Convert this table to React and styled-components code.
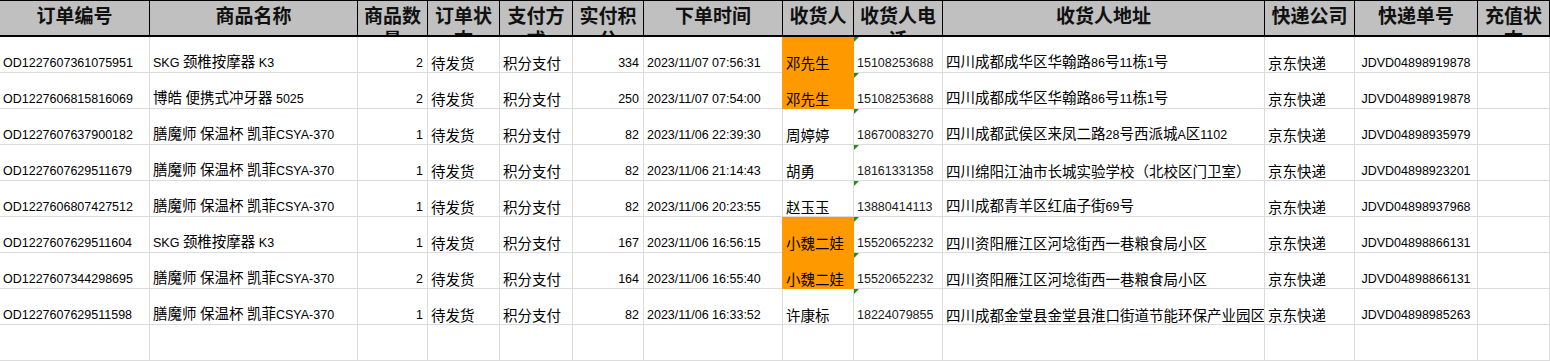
import React from "react";
import styled, { createGlobalStyle } from "styled-components";

const GlobalStyle = createGlobalStyle`
  html, body { margin: 0; padding: 0; background: #ffffff; }
  body { font-family: "Noto Sans CJK SC", "Liberation Sans", sans-serif; }
`;

const COLS = [150, 208, 70, 72, 73, 71, 139, 71, 89, 322, 90, 123, 72];

const Sheet = styled.div`
  display: grid;
  grid-template-columns: ${COLS.map((w) => w + "px").join(" ")};
  width: 1550px;
  overflow: hidden;
`;

const HeaderCell = styled.div`
  box-sizing: border-box;
  height: 37px;
  background: #c0c0c0;
  border-top: 1px solid #000;
  border-bottom: 2px solid #000;
  border-right: 1px solid #000;
  padding: 2px 1px 0;
  overflow: hidden;
  text-align: center;
  font-family: "Noto Sans CJK SC", sans-serif;
  font-weight: 700;
  font-size: 19px;
  line-height: 24px;
  color: #111;
  word-break: break-all;
`;

const Cell = styled.div`
  position: relative;
  box-sizing: border-box;
  height: 36px;
  display: flex;
  align-items: flex-end;
  justify-content: ${(p) => (p.$align === "right" ? "flex-end" : p.$align === "center" ? "center" : "flex-start")};
  padding: 0 ${(p) => (p.$align === "right" ? "4px" : "3px")} 1px 3px;
  border-right: 1px solid ${(p) => (p.$fill ? p.$fill : "#dcdcdc")};
  border-bottom: 1px solid ${(p) => (p.$fill ? p.$fill : "#dcdcdc")};
  background: ${(p) => p.$fill || "#ffffff"};
  box-shadow: ${(p) => (p.$fill ? `-1px 0 0 ${p.$fill}` : "none")};
  overflow: hidden;
  white-space: nowrap;
  font-family: "Noto Sans CJK SC", sans-serif;
  font-size: 14.5px;
  line-height: 16px;
  color: #000;
`;

const Latin = styled.span`
  font-family: "Liberation Sans", Arial, sans-serif;
  font-size: 12.5px;
  color: ${(p) => (p.$phone ? "#1a1a1a" : "#000")};
`;

const TextMark = styled.span`
  position: absolute;
  top: 0;
  left: 0;
  width: 0;
  height: 0;
  border-top: 5px solid #1f8f1f;
  border-right: 5px solid transparent;
`;

const HEADERS = [
  "订单编号",
  "商品名称",
  "商品数量",
  "订单状态",
  "支付方式",
  "实付积分",
  "下单时间",
  "收货人",
  "收货人电话",
  "收货人地址",
  "快递公司",
  "快递单号",
  "充值状态",
];

const ROWS = [
  ["OD1227607361075951", "SKG 颈椎按摩器 K3", "2", "待发货", "积分支付", "334", "2023/11/07 07:56:31", "邓先生", "15108253688", "四川成都成华区华翰路86号11栋1号", "京东快递", "JDVD04898919878", "", true],
  ["OD1227606815816069", "博皓 便携式冲牙器 5025", "2", "待发货", "积分支付", "250", "2023/11/07 07:54:00", "邓先生", "15108253688", "四川成都成华区华翰路86号11栋1号", "京东快递", "JDVD04898919878", "", true],
  ["OD1227607637900182", "膳魔师 保温杯 凯菲CSYA-370", "1", "待发货", "积分支付", "82", "2023/11/06 22:39:30", "周婷婷", "18670083270", "四川成都武侯区来凤二路28号西派城A区1102", "京东快递", "JDVD04898935979", "", false],
  ["OD1227607629511679", "膳魔师 保温杯 凯菲CSYA-370", "1", "待发货", "积分支付", "82", "2023/11/06 21:14:43", "胡勇", "18161331358", "四川绵阳江油市长城实验学校（北校区门卫室）", "京东快递", "JDVD04898923201", "", false],
  ["OD1227606807427512", "膳魔师 保温杯 凯菲CSYA-370", "1", "待发货", "积分支付", "82", "2023/11/06 20:23:55", "赵玉玉", "13880414113", "四川成都青羊区红庙子街69号", "京东快递", "JDVD04898937968", "", false],
  ["OD1227607629511604", "SKG 颈椎按摩器 K3", "1", "待发货", "积分支付", "167", "2023/11/06 16:56:15", "小魏二娃", "15520652232", "四川资阳雁江区河埝街西一巷粮食局小区", "京东快递", "JDVD04898866131", "", true],
  ["OD1227607344298695", "膳魔师 保温杯 凯菲CSYA-370", "2", "待发货", "积分支付", "164", "2023/11/06 16:55:40", "小魏二娃", "15520652232", "四川资阳雁江区河埝街西一巷粮食局小区", "京东快递", "JDVD04898866131", "", true],
  ["OD1227607629511598", "膳魔师 保温杯 凯菲CSYA-370", "1", "待发货", "积分支付", "82", "2023/11/06 16:33:52", "许康标", "18224079855", "四川成都金堂县金堂县淮口街道节能环保产业园区", "京东快递", "JDVD04898985263", "", false],
];

const ALIGN = ["left", "left", "right", "left", "left", "right", "left", "left", "left", "left", "left", "center", "left"];

function Mixed({ text, phone }) {
  const parts = text.split(/([\u0000-\u2E7F]+)/).filter((s) => s.length);
  return parts.map((s, i) =>
    /^[\u0000-\u2E7F]+$/.test(s) ? (
      <Latin key={i} $phone={phone}>{s.replace(/ /g, "\u00a0")}</Latin>
    ) : (
      <React.Fragment key={i}>{s}</React.Fragment>
    )
  );
}

export default function App() {
  return (
    <>
      <GlobalStyle />
      <Sheet>
        {HEADERS.map((h) => (
          <HeaderCell key={h}>{h}</HeaderCell>
        ))}
        {ROWS.map((row, r) =>
          row.slice(0, 13).map((v, c) => (
            <Cell key={r + "-" + c} $align={ALIGN[c]} $fill={c === 7 && row[13] ? "#ff9900" : undefined}>
              {c === 8 && <TextMark />}
              <span>
                <Mixed text={v} phone={c === 8} />
              </span>
            </Cell>
          ))
        )}
        {COLS.map((_, c) => (
          <Cell key={"e" + c} />
        ))}
      </Sheet>
    </>
  );
}
